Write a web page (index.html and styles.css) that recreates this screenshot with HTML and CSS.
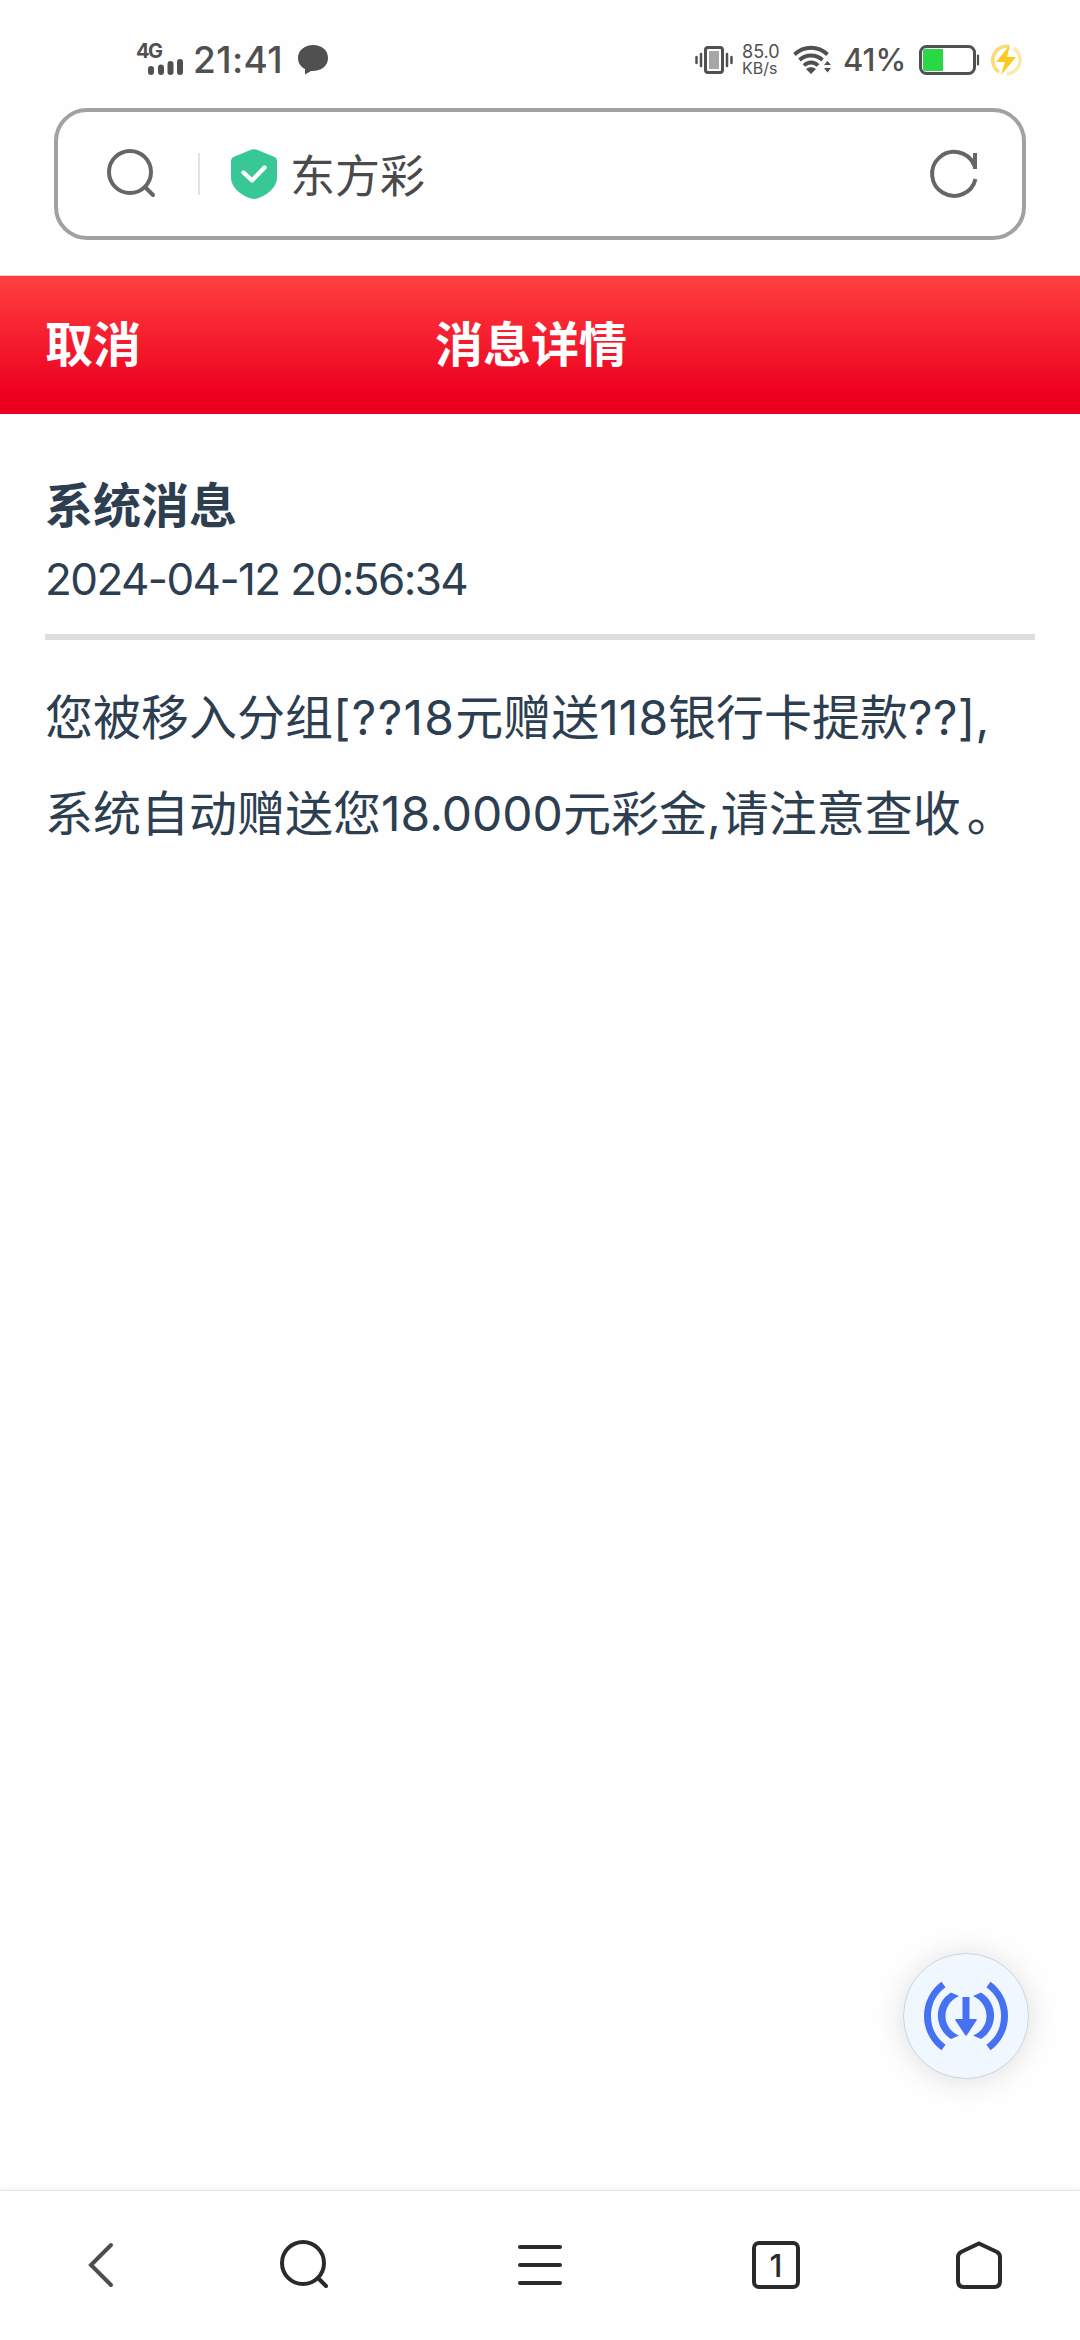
FILE: index.html
```html
<!DOCTYPE html>
<html lang="zh-CN">
<head>
<meta charset="utf-8">
<title>消息详情</title>
<link rel="stylesheet" href="styles.css">
</head>
<body>
<div class="status">
  <div class="network">
    <span class="network-type">4G</span>
    <svg class="bars" width="36" height="18" viewBox="0 0 36 18"><g stroke="#505050" stroke-width="6" stroke-linecap="round"><path d="M3 11v3M13 9.500v4.500M22.500 6v8M32 4v10"/></g></svg>
  </div>
  <span class="clock">21:41</span>
  <svg class="bubble" width="30" height="30" viewBox="0 0 30 30"><path d="M15 0C6.500 0 0 5.500 0 13c0 5 3 9 7 11v5.500L13 26c10 .5 17-5 17-13S23.500 0 15 0z" fill="#505050"/></svg>
  <div class="status-right">
    <svg width="38" height="28" viewBox="0 0 38 28"><rect x="10.500" y="1.500" width="17" height="25" rx="2.500" fill="#fff" stroke="#505050" stroke-width="3"/><path d="M14 5h10v18H14z" fill="#a6a6a6"/><path d="M1.500 11v6M6 8v12M32 8v12M36.500 11v6" stroke="#505050" stroke-width="2.500" stroke-linecap="round"/></svg>
    <div class="speed"><span>85.0</span><span class="unit">KB/s</span></div>
    <svg class="wifi" width="39" height="28" viewBox="0 0 39 28"><g fill="none" stroke="#505050" stroke-width="3.800"><path d="M1.500 8.500C11-.5 25-.5 34.500 8.500"/><path d="M6.500 14c6.500-6 16.500-6 23 0"/><path d="M11 19.500c4-4 10-4 14 0"/></g><path d="M13 23c3-2.500 7-2.500 10 0l-5 5zM31 19h7l-3.500-4zM31 22h7l-3.500 4.500z" fill="#505050"/></svg>
    <span class="percent">41%</span>
    <svg class="battery" width="61" height="30" viewBox="0 0 61 30"><rect x="1.500" y="1.500" width="54" height="27" rx="6" fill="#fff" stroke="#505050" stroke-width="3"/><path d="M4 6q0-2 2-2h18v22H6q-2 0-2-2z" fill="#29d845"/><path d="M59 10.500v9" stroke="#505050" stroke-width="2.200" stroke-linecap="round"/></svg>
    <svg class="bolt" width="32" height="32" viewBox="0 0 32 32"><g fill="none" stroke-width="3.500"><path d="M19 2.500A14 14 0 0 0 9 28" stroke="#f8dc75"/><path d="M24 4.500A14 14 0 0 1 17 30" stroke="#fbe9ad"/></g><path d="M20 1L6 18h9l-4 13 15-18h-9z" fill="#f9cb20"/></svg>
  </div>
</div>
<div class="address">
  <svg class="search" width="50" height="50" viewBox="0 0 50 50"><g fill="none" stroke="#666" stroke-width="4"><circle cx="23" cy="23" r="21"/><path d="M38 38l8 8" stroke-linecap="round"/></g></svg>
  <span class="divider"></span>
  <svg class="shield" width="46" height="50" viewBox="0 0 46 50"><path d="M20 .8q3-1.200 6 0l17 7q3 1.300 3 4.500v16C46 39 35 47 26 49.500q-3 .8-6 0C11 47 0 39 0 28.300v-16q0-3.200 3-4.500z" fill="#37c896"/><path d="M12.500 23.500l8.500 8 12.500-13" fill="none" stroke="#fff" stroke-width="4.400" stroke-linecap="round" stroke-linejoin="round"/></svg>
  <span class="site">东方彩</span>
  <svg class="refresh" width="48" height="48" viewBox="0 0 48 48"><g fill="none" stroke="#666" stroke-width="4"><path d="M45.500 29A22 22 0 1 1 44 14.500"/><path d="M45 3v16"/></g><path d="M40 10l5 6v3h-1.500z" fill="#666"/></svg>
</div>
<div class="header"><span class="cancel">取消</span><span class="title">消息详情</span></div>
<div class="message">
  <div class="subject">系统消息</div>
  <div class="date">2024-04-12 20:56:34</div>
  <div class="body">
    <div>您被移入分组<span class="run-a">[??18</span>元赠送<span class="run-b">118</span>银行卡提款<span class="run-c">??],</span></div>
    <div>系统自动赠送您18.0000元彩金,请注意查收<span class="stop">。</span></div>
  </div>
</div>
<div class="fab">
  <svg width="84" height="70" viewBox="0 0 84 70"><g fill="none" stroke="#4672f2" stroke-width="7"><path d="M19.500 3.500a39 39 0 0 0 0 63M64.500 3.500a39 39 0 0 1 0 63"/></g><path d="M27 11.500l8 3.500C17 23 17 47 35 54.500l-8 3.500C9.500 47 9.500 22 27 11.500zM57 11.500L49 15c18 8 18 32 0 39.500l8 3.500c17.500-11 17.500-36 0-46.500z" fill="#4672f2"/><path d="M38.500 16h7v22h6q2 0 1 1.500L43 54q-1 1.200-2 0L31.500 39.500q-1-1.500 1-1.500h6z" fill="#4672f2"/></svg>
</div>
<div class="nav">
  <svg class="nav-back" width="26" height="46" viewBox="0 0 26 46"><path d="M23 3L3 23l20 20" fill="none" stroke="#4d4d4d" stroke-width="4" stroke-linecap="round"/></svg>
  <svg class="nav-search" width="50" height="50" viewBox="0 0 50 50"><g fill="none" stroke="#2a2a2a" stroke-width="4"><circle cx="23" cy="23" r="21"/><path d="M38 38l8 8" stroke-linecap="round"/></g></svg>
  <svg class="nav-menu" width="44" height="42" viewBox="0 0 44 42"><path d="M2 3h40M2 21h40M2 39h40" stroke="#2a2a2a" stroke-width="4" stroke-linecap="round"/></svg>
  <span class="nav-tabs">1</span>
  <svg class="nav-home" width="46" height="48" viewBox="0 0 46 48"><path d="M23 2.500l17.500 8.200Q44 12.500 44 16v24q0 6-6 6H8q-6 0-6-6V16q0-3.500 3.500-5.300z" fill="none" stroke="#2a2a2a" stroke-width="4"/></svg>
</div>
</body>
</html>
```
FILE: styles.css
```css
* { box-sizing: border-box; }
body {
  margin: 0;
  width: 1080px;
  height: 2340px;
  display: flex;
  flex-direction: column;
  overflow: hidden;
  background: #fefefe;
  color: #2c3e50;
  font-family: Inter, "Noto Sans CJK SC", sans-serif;
}
svg { display: block; flex: none; overflow: visible; }
span { white-space: nowrap; }
.status {
  height: 108px;
  padding: 12px 58px 0 136px;
  display: flex;
  align-items: center;
  color: #505050;
}
.network { width: 48px; height: 34px; margin-top: -3px; flex: none; }
.network-type { display: block; font-size: 20px; line-height: 18px; font-weight: 700; letter-spacing: -1.5px; }
.bars { margin: -2px 0 0 12px; }
.clock { width: 104px; margin-left: 9px; font-size: 37px; line-height: 44px; letter-spacing: 0.4px; font-weight: 500; }
.bubble { margin-left: 1px; }
.status-right { display: flex; align-items: center; margin-left: auto; }
.speed { width: 50px; margin-left: 9px; display: flex; flex-direction: column; font-size: 18px; line-height: 16px; }
.unit { font-size: 16px; }
.wifi { margin-left: 1px; }
.percent { width: 87px; padding-left: 11px; font-size: 31px; line-height: 36px; font-weight: 500; letter-spacing: 0; }
.bolt { margin-left: 10px; }
.address {
  width: 972px;
  height: 132px;
  margin: 0 54px;
  padding: 0 44px 0 49px;
  flex: none;
  display: flex;
  align-items: center;
  border: 4px solid #a1a1a1;
  border-radius: 33px;
  background: #fff;
}
.divider { width: 2px; height: 42px; margin: 0 31px 0 41px; background: #e2e2e2; }
.site { margin-left: 13px; padding-top: 5px; color: #4a4a4a; font-size: 45px; line-height: 60px; }
.refresh { margin-left: auto; }
.header {
  height: 139px;
  margin-top: 35px;
  padding: 0 45px 8px;
  flex: none;
  display: grid;
  grid-template-columns: 390px auto;
  align-items: center;
  border-top: 1px solid #f4c8cc;
  background: linear-gradient(#ff4040, #ed0020 85%, #ea0020);
  color: #fff;
  font-size: 48px;
  font-weight: 700;
}
.message { flex: 1; padding: 0 45px; }
.subject { margin-top: 56px; font-size: 48px; line-height: 72px; font-weight: 700; }
.date { height: 98px; padding-top: 9px; border-bottom: 6px solid #ddd; font-size: 44px; line-height: 56px; letter-spacing: -1.6px; }
.body { margin-top: 30px; font-size: 48px; line-height: 96px; white-space: nowrap; }
.run-a { letter-spacing: 1.3px; }
.run-b { letter-spacing: 0; }
.run-c { letter-spacing: 0.3px; }
.stop { margin-left: 6px; }
.fab {
  position: absolute;
  left: 903px;
  top: 1953px;
  width: 126px;
  height: 126px;
  display: grid;
  place-items: center;
  border: 1px solid #c9d6e6;
  border-radius: 50%;
  background: #f0f7ff;
  box-shadow: 0 2px 28px rgba(0, 0, 0, 0.13);
}
.nav {
  height: 150px;
  padding: 0 78px 2px 88px;
  flex: none;
  display: flex;
  align-items: center;
  border-top: 1px solid #e2e2e2;
  background: #fff;
  box-shadow: 0 -2px 5px rgba(0, 0, 0, 0.04);
}
.nav-search { margin-left: 166px; }
.nav-menu { margin-left: 188px; }
.nav-tabs {
  width: 48px;
  height: 48px;
  margin-left: 190px;
  border: 4px solid #2a2a2a;
  border-radius: 7px;
  color: #2a2a2a;
  font-size: 31px;
  font-weight: 500;
  line-height: 41px;
  text-align: center;
}
.nav-home { margin-left: auto; }
```
